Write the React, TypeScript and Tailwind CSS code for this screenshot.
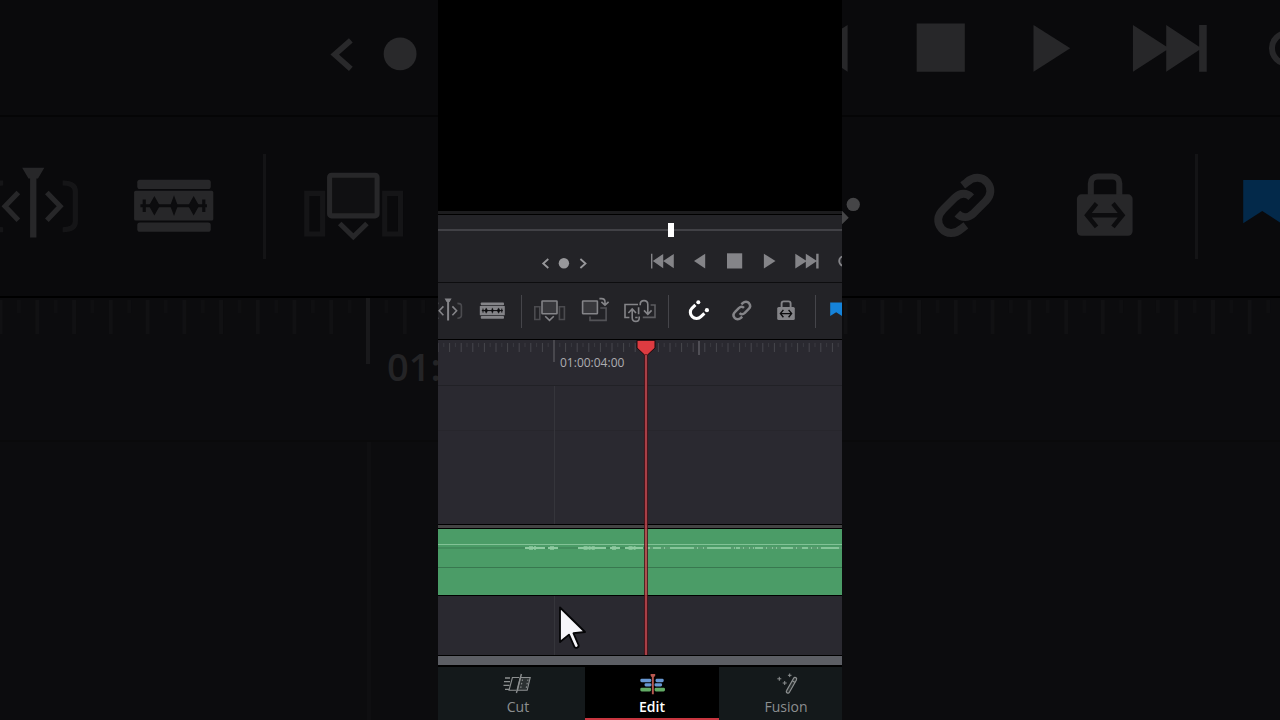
import type { ReactNode } from 'react';
import clsx from 'clsx';

type IconProps = { className?: string };

type ControlProps = {
  label: string;
  large?: boolean;
  active?: boolean;
  children: ReactNode;
};

const CUTOUT = '#0c0c0e';

/* ---------- transport icons, 36 x 24 ---------- */

function TransportButton({ label, large, children }: ControlProps) {
  return (
    <button
      type="button"
      aria-label={label}
      className={clsx('shrink-0', large ? 'h-[76px] w-[114px] text-[#272729]' : 'h-6 w-9 text-[#848488]')}
    >
      <svg viewBox="0 0 36 24" className="block size-full" fill="currentColor">
        {children}
      </svg>
    </button>
  );
}

function KeyframeButton({ label, large, children }: ControlProps) {
  return (
    <button
      type="button"
      aria-label={label}
      className={clsx('shrink-0', large ? 'h-[76px] w-[60px] text-[#29292b]' : 'h-6 w-[19px] text-[#98989b]')}
    >
      <svg viewBox="0 0 19 24" className="block size-full" fill="none" stroke="currentColor" strokeWidth="1.8">
        {children}
      </svg>
    </button>
  );
}

const chevronLeft = <path d="M12.3 8 7.2 12.5l5.1 4.5" />;
const chevronRight = <path d="m6.4 8 5.1 4.5L6.4 17" />;
const keyDot = <circle cx="8.9" cy="12.3" r="5.2" fill="currentColor" stroke="none" />;

const toStart = <path d="M6 4.8h1.4v14.6H6zM18.2 4.9v14.4L7.8 12.1zM28.8 4.9v14.4l-10.6-7.2z" />;
const reverse = <path d="M24.2 4.7v14.8L13 12.1z" />;
const stop = <path d="M10 4.3h15.2v15.2H10z" />;
const play = <path d="M10.9 4.7v14.8l11.6-7.4z" />;
const toEnd = <path d="M6.3 4.7v14.8l10.5-6.8v6.8l10.4-6.9v6.9h2.4V4.7h-2.4v6.9L16.8 4.7v6.8z" />;
const loop = (
  <path
    d="M24 7.3h-5a4.8 4.8 0 0 0 0 9.6h5"
    fill="none"
    stroke="currentColor"
    strokeWidth="1.9"
  />
);

/* ---------- toolbar icons, 45 x 36 ---------- */

function ToolButton({ label, large, active, children }: ControlProps) {
  return (
    <button
      type="button"
      aria-label={label}
      className={clsx(
        'shrink-0',
        large ? 'h-[114px] w-[143px]' : 'h-9 w-[45px]',
        large ? (active ? 'text-[#454547]' : 'text-[#272729]') : active ? 'text-white' : 'text-[#848488]'
      )}
    >
      <svg viewBox="0 0 45 36" className="block size-full" fill="none" stroke="currentColor" strokeWidth="1.6">
        {children}
      </svg>
    </button>
  );
}

const trimIcon = (
  <>
    <path d="M18.6 5.6h7l-2 3.4h-.5v18.6h-2V9h-.5z" fill="currentColor" stroke="none" />
    <path d="m17.4 13.4-4.2 4.4 4.2 4.4M26.4 13.4l4.2 4.4-4.2 4.4" />
    <path d="M12.6 10.4c-2.6 0-4 .8-4 2.6v9.6c0 1.8 1.4 2.6 4 2.6M31.4 10.4c2.6 0 4 .8 4 2.6v9.6c0 1.8-1.4 2.6-4 2.6" opacity=".42" />
  </>
);

const audioIcon = (
  <>
    <g fill="currentColor" stroke="none">
      <rect x="9.8" y="9.4" width="23.2" height="2.9" rx=".8" />
      <rect x="8.8" y="12.9" width="25" height="9.4" rx=".5" />
      <rect x="9.8" y="22.9" width="23.2" height="2.9" rx=".8" />
    </g>
    <g stroke={CUTOUT}>
      <path d="M10.8 17.6h21" strokeWidth="1" />
      <path d="M12 15.6v4M30.8 15.6v4" strokeWidth="1" />
      <path d="M15.2 14.9l1.5 2.7-1.5 2.7-1.5-2.7zM21.4 14.9l1 2.7-1 2.7-1-2.7zM27.6 14.9l1.5 2.7-1.5 2.7-1.5-2.7z" fill={CUTOUT} strokeWidth=".4" />
    </g>
  </>
);

const insertIcon = (
  <>
    <path d="M6.8 13.7h5v12.8h-5zM31.4 13.7h5v12.8h-5z" opacity=".42" />
    <rect x="14" y="8" width="15" height="12.8" rx=".6" fill="currentColor" fillOpacity=".22" />
    <path d="m17.2 23.2 4.3 4.2 4.3-4.2" />
  </>
);

const overwriteIcon = (
  <>
    <path d="M27.3 15h5.8v12.4H17v-4" opacity=".5" />
    <rect x="9.6" y="8" width="14.8" height="12.8" rx=".6" fill="currentColor" fillOpacity=".22" />
    <path d="M26.4 5.6h2.2c2.4 0 3.4 1.2 3.4 3.4v2.4M28.4 8.8l3.6 3.4 3.6-3.4" />
  </>
);

const replaceIcon = (
  <>
    <path d="M11.4 24.5H7V11.5h13" />
    <path d="M17.2 24.5h2.4M20.6 14.3v7" />
    <path d="M32.6 12h4.4v12.4H24.8" opacity=".6" />
    <path d="M10.4 20l3.8-4 3.8 4M14.2 16.4v8.4c0 2.3 1.4 3.6 3.6 3.6s3.4-1.2 3.4-3.4v-1.6" />
    <path d="M22.2 12.2v-.8c0-2.4 1.4-3.8 3.8-3.8s3.8 1.4 3.8 3.8v9.8M26 17.4l3.8 4 3.8-4" />
  </>
);

const magnetIcon = (
  <>
    <path d="M20.4 11.9 17.1 15a6.1 6.1 0 0 0 8.8 8.6l3.5-3.3" strokeWidth="3.1" />
    <circle cx="23.3" cy="9.3" r="2" fill="currentColor" stroke="none" />
    <circle cx="31.9" cy="17.2" r="2.1" fill="currentColor" stroke="none" />
  </>
);

const linkIcon = (
  <g strokeWidth="2.5">
    <path d="M21.3 11.2 22.6 10.2c2.2-2 4.8-1.8 6.4 0 1.5 1.8 1.4 4.2-.5 6L24.8 19.9c-1.8 1.7-3.8 1.6-5.2.2" />
    <path d="M22.3 23.8 21 24.8c-2.2 2-4.8 1.8-6.4 0-1.5-1.8-1.4-4.2.5-6L18.8 15.1c1.8-1.7 3.8-1.6 5.2-.2" />
  </g>
);

const lockIcon = (
  <>
    <path d="M16.6 14.2v-3.6c0-1.4.8-2.2 2.2-2.2h4.6c1.4 0 2.2.8 2.2 2.2v3.6" strokeWidth="1.9" />
    <rect x="12.2" y="14" width="17.6" height="13.1" rx="1.5" fill="currentColor" stroke="none" />
    <path d="m18.4 16.9-3 3.7 3 3.7M23.6 16.9l3 3.7-3 3.7M16 20.6h10" stroke={CUTOUT} strokeWidth="1.4" />
  </>
);

function FlagButton({ large }: { large?: boolean }) {
  return (
    <button type="button" aria-label="Marker" className={clsx('shrink-0', large ? 'h-[114px] w-[143px] text-[#03294a]' : 'h-9 w-[45px] text-[#1583da]')}>
      <svg viewBox="0 0 45 36" className="block size-full" fill="currentColor">
        <path d="M8.2 9.5h12v13.6l-6-3.8-6 3.8z" />
      </svg>
    </button>
  );
}

function Divider({ large }: { large?: boolean }) {
  return (
    <span
      className={clsx('shrink-0', large ? 'mr-[19px] ml-3.5 h-[105px] w-[3px] bg-[#141416]' : 'mr-1.5 ml-[5px] h-[33px] w-px bg-[#45454a]')}
    />
  );
}

/* ---------- timeline ruler ---------- */

type RulerProps = { origin: number; step: number; from: number; to: number; large?: boolean };

function RulerTicks({ origin, step, from, to, large }: RulerProps) {
  const ticks = Array.from({ length: to - from + 1 }, (_, i) => from + i);
  return (
    <svg className="absolute inset-0 size-full" fill="none" strokeWidth={large ? 4 : 1}>
      {ticks.map((n) => {
        const x = origin + n * step;
        const top = large ? 2 : 3;
        if (n === 0) {
          return <path key={n} d={`M${x} 0V${large ? 66 : 22}`} stroke={large ? '#19191b' : '#66666b'} />;
        }
        if (n === 25 && !large) {
          return <path key={n} d={`M${x} 1v14`} stroke="#77777c" />;
        }
        const long = n % 2 === 0;
        const height = large ? (long ? 34 : 13) : long ? 9 : 4;
        return <path key={n} d={`M${x} ${top}v${height}`} stroke={large ? (long ? '#111113' : '#0f0f11') : long ? '#47474d' : '#3a3a40'} />;
      })}
    </svg>
  );
}

/* ---------- enlarged, dimmed side panels ---------- */

function LeftBackdrop() {
  return (
    <section className="flex min-w-0 flex-col overflow-hidden bg-[#0c0c0e]">
      <div className="flex h-[117px] shrink-0 items-start border-b-2 border-[#050506] bg-[#0a0a0c] pt-[15px] pl-[312px]">
        <KeyframeButton large label="Previous keyframe">{chevronLeft}</KeyframeButton>
        <KeyframeButton large label="Add keyframe">{keyDot}</KeyframeButton>
      </div>
      <div className="flex h-[181px] shrink-0 items-center border-b-2 border-black bg-[#0a0a0c]">
        <div className="-ml-[37px] flex items-center">
          <ToolButton large label="Trim">{trimIcon}</ToolButton>
          <ToolButton large label="Audio waveform">{audioIcon}</ToolButton>
          <Divider large />
          <ToolButton large label="Insert clip">{insertIcon}</ToolButton>
        </div>
      </div>
      <div className="relative h-36 shrink-0 overflow-hidden border-b-2 border-[#0a0a0b] pt-11 pl-[387px]">
        <RulerTicks large origin={368} step={18.37} from={-20} to={3} />
        <span className="relative text-[38px] leading-[48px] font-semibold text-[#242426]">01:</span>
      </div>
      <div className="flex flex-1 pl-[367px]">
        <div className="w-1 bg-[#0f0f11]" />
      </div>
    </section>
  );
}

function RightBackdrop() {
  return (
    <section className="flex min-w-0 flex-col overflow-hidden bg-[#0c0c0e]">
      <div className="flex h-[117px] shrink-0 items-start border-b-2 border-[#050506] bg-[#0a0a0c] pt-2.5">
        <div className="-ml-[71px] flex">
          <TransportButton large label="Play reverse">{reverse}</TransportButton>
          <TransportButton large label="Stop">{stop}</TransportButton>
          <TransportButton large label="Play">{play}</TransportButton>
          <TransportButton large label="Last frame">{toEnd}</TransportButton>
          <TransportButton large label="Loop">{loop}</TransportButton>
        </div>
      </div>
      <div className="flex h-[181px] shrink-0 items-center border-b-2 border-black bg-[#0a0a0c]">
        <div className="-ml-[90px] flex items-center">
          <ToolButton large active label="Snapping">{magnetIcon}</ToolButton>
          <ToolButton large label="Linked selection">{linkIcon}</ToolButton>
          <ToolButton large label="Position lock">{lockIcon}</ToolButton>
          <Divider large />
          <FlagButton large />
        </div>
      </div>
      <div className="relative h-36 shrink-0 border-b-2 border-[#0a0a0b]">
        <RulerTicks large origin={-474} step={18.37} from={26} to={49} />
      </div>
      <div className="flex-1" />
    </section>
  );
}

/* ---------- audio clip ---------- */

const quietBits = [
  [87, 20], [110, 10], [140, 28], [172, 10], [187, 18],
];
const loudBits = [
  [212, 3], [223, 9], [256, 14], [293, 5], [302, 15], [325, 18], [355, 9], [370, 14], [401, 3],
];

function AudioClip() {
  return (
    <div className="h-[66px] bg-[#4b9c67]">
      <svg className="block h-full w-full" fill="none">
        <path d="M0 15.5h2000" stroke="#82c296" />
        <path d="M0 19h208" stroke="#3b7c52" />
        <path d="M208 19h2000" stroke="#86c499" strokeWidth="2" />
        <path d="M0 38.5h2000" stroke="#38784f" />
        {quietBits.map(([x, w]) => (
          <g key={x} stroke="#8fcaa1">
            <path d={`M${x} 19h${w}`} strokeWidth="2" />
            <path d={`M${x + w * 0.2} 19h${w * 0.4}`} strokeWidth="3.5" strokeDasharray="4 1 2 1" />
          </g>
        ))}
        {loudBits.map(([x, w]) => (
          <path key={x} d={`M${x} 19h${w}`} stroke="#4c8d63" strokeWidth="1.4" strokeDasharray="3 1 5 1" />
        ))}
      </svg>
    </div>
  );
}

/* ---------- page tabs ---------- */

function CutIcon({ className }: IconProps) {
  return (
    <svg viewBox="0 0 30 22" className={className} fill="none" stroke="currentColor" strokeWidth="1.1">
      <path d="M2 5h5M1 8.7h6M.5 12.3h6M2 16.3h4" strokeWidth="1.3" />
      <path d="M16 4.5H9.4L6 17.3h7" />
      <path d="M17.3 4.5h9.9l-3 12.8h-9.8z" fill="currentColor" fillOpacity=".2" />
      <path d="m18.4 1-5 19" strokeWidth="1.4" />
      <path d="m19.5 6.5-2 9.5M25 6.5 23 16" strokeDasharray="1.5 2" />
    </svg>
  );
}

function EditIcon({ className }: IconProps) {
  return (
    <svg viewBox="0 0 30 22" className={className}>
      <g fill="#6797d2">
        <rect x="3.3" y="5.8" width="11" height="3.4" rx="1.4" />
        <rect x="18.5" y="5.8" width="8.2" height="3.4" rx="1.4" />
        <rect x="7.5" y="10.2" width="7" height="3.3" rx="1.4" />
        <rect x="17.5" y="10.2" width="7.6" height="3.3" rx="1.4" />
      </g>
      <g fill="#62ab65">
        <rect x="3.3" y="14.7" width="10.8" height="3.8" rx="1.4" />
        <rect x="17.6" y="14.7" width="10.4" height="3.8" rx="1.4" />
      </g>
      <path d="M13.6 1h4.6v1.8l-1.4 1.5v17h-1.9v-17l-1.3-1.5z" fill="#b85850" />
    </svg>
  );
}

function FusionIcon({ className }: IconProps) {
  return (
    <svg viewBox="0 0 30 22" className={className} fill="none" stroke="currentColor">
      <path d="m22.6 5.2-7 12.4c-.6 1-.2 1.9.6 2.3.9.4 1.7.2 2.2-.7l7-12.2c.5-1 .2-1.9-.6-2.4-.8-.4-1.7-.3-2.2.6z" strokeWidth="1.2" fill="currentColor" fillOpacity=".2" />
      <path d="m21.3 7.8 2.8 1.6" strokeWidth="1.2" />
      <path d="M8.3 3.8v4M6.3 5.8h4M13.7 8v4M11.7 10h4M18.7.5v3.6M16.9 2.3h3.6" strokeWidth="1" />
    </svg>
  );
}

function PageTabs() {
  return (
    <nav className="flex h-[53px] shrink-0 overflow-hidden bg-[#14191b] pl-[13px] text-sm leading-6 text-[#8c8f90]">
      <button type="button" className="flex w-[134px] shrink-0 flex-col items-center pt-1.5">
        <CutIcon className="h-[22px] w-[30px]" />
        <span>Cut</span>
      </button>
      <button type="button" className="flex w-[134px] shrink-0 flex-col items-center border-b-2 border-[#c8353f] bg-black pt-1.5 font-semibold text-white">
        <EditIcon className="h-[22px] w-[30px] shrink-0" />
        <span>Edit</span>
      </button>
      <button type="button" className="flex w-[134px] shrink-0 flex-col items-center pt-1.5">
        <FusionIcon className="h-[22px] w-[30px]" />
        <span>Fusion</span>
      </button>
    </nav>
  );
}

/* ---------- main editor column ---------- */

function Playhead() {
  return (
    <div className="absolute top-0 bottom-0 left-[198px] flex w-5 flex-col items-center">
      <svg viewBox="0 0 20 17" className="h-[17px] w-5 shrink-0">
        <path d="M1 .3h18v7.6L11.5 15h-3L1 7.9z" fill="#de3b41" stroke="#17080b" strokeWidth="1" />
      </svg>
      <div className="-mt-0.5 w-1 flex-1 border-x border-[#4a1219] bg-[#be434b] opacity-85" />
    </div>
  );
}

function Pointer() {
  return (
    <svg viewBox="0 0 32 46" className="absolute bottom-1 left-[118px] h-[46px] w-8">
      <path
        d="M4 2.5v34.5l9-7.4 5.2 11.8c.6 1.4 1.7 1.8 3 1.2 1.4-.6 1.8-1.6 1.2-3l-5-11.4L29 27z"
        fill="#f6f5fa"
        stroke="#050507"
        strokeWidth="1.8"
        strokeLinejoin="round"
      />
    </svg>
  );
}

function Editor() {
  return (
    <main className="flex min-w-0 flex-col overflow-hidden bg-[#232327]">
      <div className="flex-1 bg-black" />
      <div className="h-1 shrink-0 border-b border-black bg-[#1c1c1e]" />

      <div className="flex h-[30px] shrink-0 items-center">
        <input
          type="range"
          aria-label="Scrub position"
          max={1000}
          defaultValue={579}
          className="h-[14px] w-full appearance-none bg-transparent [&::-webkit-slider-runnable-track]:h-0.5 [&::-webkit-slider-runnable-track]:bg-[#414146] [&::-webkit-slider-thumb]:-mt-1.5 [&::-webkit-slider-thumb]:h-[14px] [&::-webkit-slider-thumb]:w-1.5 [&::-webkit-slider-thumb]:appearance-none [&::-webkit-slider-thumb]:bg-white"
        />
      </div>

      <div className="flex h-[38px] shrink-0 items-center border-b border-[#0d0d0f] pb-[5px] pl-[98px]">
        <div className="flex pt-1">
          <KeyframeButton label="Previous keyframe">{chevronLeft}</KeyframeButton>
          <KeyframeButton label="Add keyframe">{keyDot}</KeyframeButton>
          <KeyframeButton label="Next keyframe">{chevronRight}</KeyframeButton>
        </div>
        <div className="ml-13 flex">
          <TransportButton label="First frame">{toStart}</TransportButton>
          <TransportButton label="Play reverse">{reverse}</TransportButton>
          <TransportButton label="Stop">{stop}</TransportButton>
          <TransportButton label="Play">{play}</TransportButton>
          <TransportButton label="Last frame">{toEnd}</TransportButton>
          <TransportButton label="Loop">{loop}</TransportButton>
        </div>
      </div>

      <div className="flex h-[57px] shrink-0 items-center border-b border-black">
        <div className="-ml-3 flex items-center">
          <ToolButton label="Trim">{trimIcon}</ToolButton>
          <ToolButton label="Audio waveform">{audioIcon}</ToolButton>
          <Divider />
          <ToolButton label="Insert clip">{insertIcon}</ToolButton>
          <ToolButton label="Overwrite clip">{overwriteIcon}</ToolButton>
          <ToolButton label="Replace clip">{replaceIcon}</ToolButton>
          <Divider />
          <ToolButton active label="Snapping">{magnetIcon}</ToolButton>
          <ToolButton label="Linked selection">{linkIcon}</ToolButton>
          <ToolButton label="Position lock">{lockIcon}</ToolButton>
          <Divider />
          <FlagButton />
        </div>
      </div>

      <div className="relative shrink-0 bg-[#2a2930]">
        <div className="relative h-[46px] border-b border-[#212126] pt-[15px] pl-[122px]">
          <RulerTicks origin={116} step={5.8} from={-20} to={50} />
          <span className="relative block text-xs leading-4 text-[#adadb1]">01:00:04:00</span>
        </div>
        <div className="relative">
          <div className="absolute inset-y-0 left-[116px] w-px bg-[#35353b]" />
          <div className="h-[45px] border-b border-[#27262c]" />
          <div className="h-[93px]" />
          <div className="relative">
            <div className="h-[5px] border-y border-black bg-[#444444]" />
            <AudioClip />
            <div className="h-px bg-black" />
          </div>
          <div className="h-[59px]" />
        </div>
        <Playhead />
        <Pointer />
      </div>

      <div className="h-3 shrink-0 border-t border-b-2 border-black bg-[#5c5e64]" />
      <PageTabs />
    </main>
  );
}

export default function App() {
  return (
    <div className="grid h-screen grid-cols-[438fr_404fr_438fr] overflow-hidden bg-[#0c0c0e] font-['Open_Sans','Noto_Sans',sans-serif]">
      <LeftBackdrop />
      <Editor />
      <RightBackdrop />
    </div>
  );
}
